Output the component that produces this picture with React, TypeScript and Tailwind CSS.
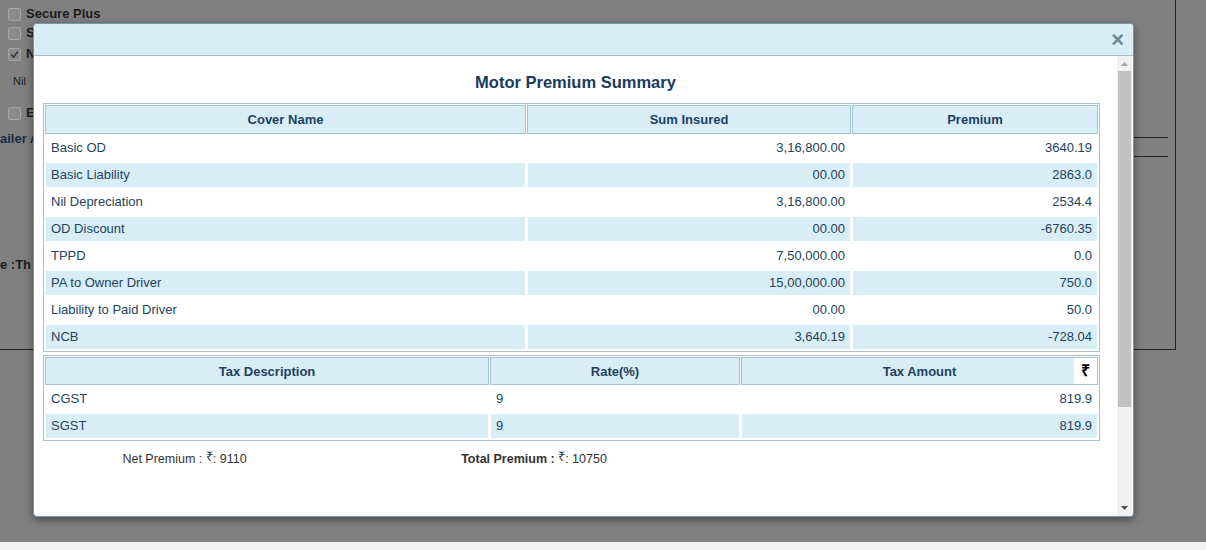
import React from 'react'

const covers = [
  { name: 'Basic OD', sum: '3,16,800.00', premium: '3640.19' },
  { name: 'Basic Liability', sum: '00.00', premium: '2863.0' },
  { name: 'Nil Depreciation', sum: '3,16,800.00', premium: '2534.4' },
  { name: 'OD Discount', sum: '00.00', premium: '-6760.35' },
  { name: 'TPPD', sum: '7,50,000.00', premium: '0.0' },
  { name: 'PA to Owner Driver', sum: '15,00,000.00', premium: '750.0' },
  { name: 'Liability to Paid Driver', sum: '00.00', premium: '50.0' },
  { name: 'NCB', sum: '3,640.19', premium: '-728.04' },
]

const taxes = [
  { name: 'CGST', rate: '9', amount: '819.9' },
  { name: 'SGST', rate: '9', amount: '819.9' },
]

function Checkbox({ checked = false }: { checked?: boolean }) {
  return (
    <span className="shrink-0 w-[13px] h-[13px] rounded-[2px] border border-[#a4a4a4] bg-[#8b8b8b] flex items-center justify-center">
      {checked && (
        <svg width="9" height="9" viewBox="0 0 9 9">
          <path d="M1 4.5 L3.5 7 L8 1.5" stroke="#3a3a3a" strokeWidth="1.6" fill="none" />
        </svg>
      )}
    </span>
  )
}

function Scrollbar() {
  return (
    <div className="w-[15px] bg-[#f1f1f1] flex flex-col">
      <div className="h-[15px] flex items-center justify-center">
        <svg width="7" height="4" viewBox="0 0 7 4">
          <path d="M0 4 L3.5 0 L7 4 Z" fill="#a3a3a3" />
        </svg>
      </div>
      <div className="mx-[1px] h-[336px] bg-[#c1c1c1]" />
      <div className="flex-1" />
      <div className="h-[17px] flex items-center justify-center">
        <svg width="7" height="4" viewBox="0 0 7 4">
          <path d="M0 0 L7 0 L3.5 4 Z" fill="#505050" />
        </svg>
      </div>
    </div>
  )
}

export default function App() {
  const th = 'border border-[#a5c4d1] bg-[#d9edf7] pt-[6px] px-[5px] text-center font-bold text-[#1e4161] leading-[16px]'
  const td = 'border border-white py-[4px] px-[5px] leading-[16px] text-[#23435c]'

  return (
    <div className="relative w-[1206px] h-[550px] overflow-hidden font-['Liberation_Sans',Arial,sans-serif] text-[13px]">
      {/* Page behind the overlay */}
      <div className="h-[542px] bg-[#808080]">
        <div className="w-[1176px] h-[350px] border-r border-b border-[#1c2228] pt-[7px]">
          <div className="flex items-center gap-[5px] pl-[8px] h-[14px]">
            <Checkbox />
            <span className="font-bold text-[#1c1c1c]">Secure Plus</span>
          </div>
          <div className="flex items-center gap-[5px] pl-[8px] h-[14px] mt-[5px] w-[33px] overflow-hidden">
            <Checkbox />
            <span className="font-bold text-[#1c1c1c]">S</span>
          </div>
          <div className="flex items-center gap-[5px] pl-[8px] h-[14px] mt-[7px] w-[33px] overflow-hidden">
            <Checkbox checked />
            <span className="font-bold text-[#1c1c1c]">N</span>
          </div>
          <div className="pl-[13px] h-[14px] mt-[13px] text-[11px] leading-[14px] text-[#1c1c1c]">Nil</div>
          <div className="flex items-center gap-[5px] pl-[8px] h-[14px] mt-[18px] w-[33px] overflow-hidden">
            <Checkbox />
            <span className="font-bold text-[#1c1c1c]">E</span>
          </div>
          <div className="flex items-start mt-[11px] h-[26px] pr-[7px]">
            <span className="w-[33px] overflow-hidden whitespace-nowrap font-bold leading-[16px] text-[#1a2f45]">ailer A</span>
            <div className="flex-1 mt-[6px] h-[20px] border-y border-[#1c2228]" />
          </div>
          <div className="mt-[100px] w-[33px] overflow-hidden whitespace-nowrap font-bold leading-[16px] text-[#1c1c1c]">e :Th</div>
        </div>
      </div>
      <div className="h-[8px] bg-[#f3f3f3]" />

      {/* Modal */}
      <div className="absolute left-[33px] top-[23px] w-[1101px] h-[494px] rounded-[4px] border border-[#7499a8] bg-white shadow-[0_3px_9px_rgba(0,0,0,0.45)] overflow-hidden flex flex-col">
        <div className="h-[32px] bg-[#d9edf7] border-b border-[#a5c2cd] flex items-center justify-end pr-[9px]">
          <span className="text-[22px] font-bold leading-none text-[#6b8896]">×</span>
        </div>
        <div className="flex-1 flex">
          <div className="flex-1 overflow-hidden">
            <h2 className="mt-[16px] text-center text-[16.5px] leading-[20px] font-bold text-[#1a3a5c]">Motor Premium Summary</h2>

            <table className="mt-[11px] ml-[9px] w-[1057px] table-fixed border-separate border-spacing-[1px] border border-[#a9c2cc]">
              <colgroup>
                <col className="w-[481px]" />
                <col className="w-[324px]" />
                <col />
              </colgroup>
              <thead>
                <tr>
                  <th className={`${th} pb-[5px]`}>Cover Name</th>
                  <th className={`${th} pb-[5px]`}>Sum Insured</th>
                  <th className={`${th} pb-[5px]`}>Premium</th>
                </tr>
              </thead>
              <tbody>
                {covers.map((c, i) => (
                  <tr key={c.name} className={i % 2 === 1 ? 'bg-[#d9edf7]' : 'bg-white'}>
                    <td className={td}>{c.name}</td>
                    <td className={`${td} text-right`}>{c.sum}</td>
                    <td className={`${td} text-right`}>{c.premium}</td>
                  </tr>
                ))}
              </tbody>
            </table>

            <table className="mt-[3px] ml-[9px] w-[1057px] table-fixed border-separate border-spacing-[1px] border border-[#a9c2cc]">
              <colgroup>
                <col className="w-[444px]" />
                <col className="w-[250px]" />
                <col />
              </colgroup>
              <thead>
                <tr>
                  <th className={`${th} pb-[4px]`}>Tax Description</th>
                  <th className={`${th} pb-[4px]`}>Rate(%)</th>
                  <th className={`${th} pb-[4px] relative`}>
                    Tax Amount
                    <span className="absolute right-0 top-0 bottom-0 w-[23px] bg-white flex items-center justify-center text-[16px] font-bold text-black">₹</span>
                  </th>
                </tr>
              </thead>
              <tbody>
                {taxes.map((t, i) => (
                  <tr key={t.name} className={i % 2 === 1 ? 'bg-[#d9edf7]' : 'bg-white'}>
                    <td className={td}>{t.name}</td>
                    <td className={td}>{t.rate}</td>
                    <td className={`${td} text-right`}>{t.amount}</td>
                  </tr>
                ))}
              </tbody>
            </table>

            <div className="mt-[11px] ml-[9px] flex text-[12.5px] leading-[14px] text-[#333]">
              <div className="w-[283px] text-center">
                Net Premium : <span className="relative top-[-2px] text-[13px]">₹</span>: 9110
              </div>
              <div className="w-[416px] text-center">
                <span className="font-bold">Total Premium : </span>
                <span className="relative top-[-2px] text-[13px]">₹</span>: 10750
              </div>
            </div>
          </div>
          <Scrollbar />
          <div className="w-[1px]" />
        </div>
      </div>
    </div>
  )
}
